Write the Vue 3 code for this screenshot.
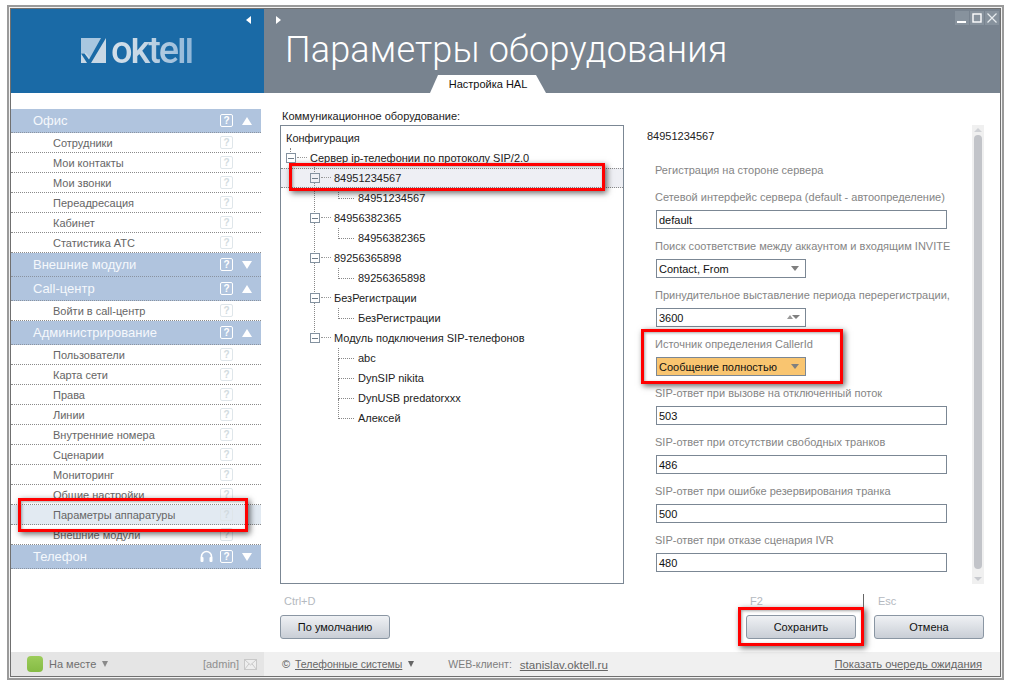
<script setup>
const groups = [
  { title: 'Офис', open: true, items: ['Сотрудники', 'Мои контакты', 'Мои звонки', 'Переадресация', 'Кабинет', 'Статистика АТС'] },
  { title: 'Внешние модули', open: false, items: [] },
  { title: 'Call-центр', open: true, items: ['Войти в call-центр'] },
  { title: 'Администрирование', open: true, items: ['Пользователи', 'Карта сети', 'Права', 'Линии', 'Внутренние номера', 'Сценарии', 'Мониторинг', 'Общие настройки', 'Параметры аппаратуры', 'Внешние модули'] },
  { title: 'Телефон', open: false, items: [], phone: true }
]
const rows = [
  { text: '84951234567', level: 1, exp: true, sel: true },
  { text: '84951234567', level: 2 },
  { text: '84956382365', level: 1, exp: true },
  { text: '84956382365', level: 2 },
  { text: '89256365898', level: 1, exp: true },
  { text: '89256365898', level: 2 },
  { text: 'БезРегистрации', level: 1, exp: true },
  { text: 'БезРегистрации', level: 2 },
  { text: 'Модуль подключения SIP-телефонов', level: 1, exp: true },
  { text: 'abc', level: 2, run: true },
  { text: 'DynSIP nikita', level: 2, run: true },
  { text: 'DynUSB predatorxxx', level: 2, run: true },
  { text: 'Алексей', level: 2 }
]
const fields = [
  { label: 'Сетевой интерфейс сервера (default - автоопределение)', value: 'default' },
  { label: 'Поиск соответствие между аккаунтом и входящим INVITE', value: 'Contact, From', kind: 'select' },
  { label: 'Принудительное выставление периода перерегистрации,', value: '3600', kind: 'spin' },
  { label: 'Источник определения CallerId', value: 'Сообщение полностью', kind: 'select', hot: true },
  { label: 'SIP-ответ при вызове на отключенный поток', value: '503' },
  { label: 'SIP-ответ при отсутствии свободных транков', value: '486' },
  { label: 'SIP-ответ при ошибке резервирования транка', value: '500' },
  { label: 'SIP-ответ при отказе сценария IVR', value: '480' }
]
</script>

<template>
  <div class="app">
    <div class="frame">
      <div class="inner">
        <header class="head">
          <div class="brand">
            <span class="tri-left"></span>
            <svg class="mark" width="25" height="25" viewBox="0 0 25 25">
              <path d="M0 0H25V25H0Z" fill="#c9d8e5" />
              <path d="M0 0H20L9 20L5 15H0Z" fill="#a9c7e0" />
              <path d="M0 15.500H3.500L8 21.500L20 0H25L10 25H6Z" fill="#1a6aa6" />
            </svg>
            <span class="logo">oktell</span>
          </div>
          <div class="title-area">
            <span class="tri-right"></span>
            <h1 class="title">Параметры оборудования</h1>
            <div class="tab">Настройка HAL</div>
            <div class="winbtns">
              <span class="wb"><svg width="14" height="14" viewBox="0 0 14 14"><rect x="2" y="10" width="9" height="2" fill="#fff" /></svg></span>
              <span class="wb"><svg width="14" height="14" viewBox="0 0 14 14"><rect x="3" y="3" width="8" height="8" fill="none" stroke="#fff" stroke-width="1.4" /></svg></span>
              <span class="wb"><svg width="14" height="14" viewBox="0 0 14 14"><path d="M2.5 2.5L11.5 11.5M11.5 2.5L2.5 11.5" stroke="#e8ecef" stroke-width="1.2" /></svg></span>
            </div>
          </div>
        </header>

        <div class="main">
          <nav class="side">
            <section v-for="g in groups" :key="g.title">
              <div class="ghead">
                <span class="gtitle">{{ g.title }}</span>
                <svg v-if="g.phone" class="phones" width="13" height="13" viewBox="0 0 13 13">
                  <path d="M1.500 8V6.500a5 5 0 0 1 10 0V8" fill="none" stroke="#fff" stroke-width="1.6" />
                  <rect x="0.500" y="7" width="3" height="5" rx="1" fill="#fff" />
                  <rect x="9.500" y="7" width="3" height="5" rx="1" fill="#fff" />
                </svg>
                <span class="help help-head">?</span>
                <span :class="g.open ? 'arrow-up' : 'arrow-down'"></span>
              </div>
              <div v-for="it in g.items" :key="it" class="item" :class="{ active: it === 'Параметры аппаратуры' }">
                <span class="itext">{{ it }}</span>
                <span class="help">?</span>
              </div>
            </section>
          </nav>

          <div class="middle">
            <div class="tlabel">Коммуникационное оборудование:</div>
            <div class="tree">
              <span class="stub-top"></span>
              <span class="spine"></span>
              <div class="root">Конфигурация</div>
              <div class="row lv0">
                <span class="marker"><span class="exp"></span><span class="dots"></span></span>Сервер ip-телефонии по протоколу SIP/2.0
              </div>
              <div v-for="(r, i) in rows" :key="i" class="row" :class="['lv' + r.level, { sel: r.sel }]">
                <span class="marker">
                  <template v-if="r.exp"><span class="exp"></span><span class="dots"></span></template>
                  <span v-else class="leaf" :class="{ run: r.run }"></span>
                </span>{{ r.text }}
              </div>
            </div>
            <div class="hint">Ctrl+D</div>
            <button class="btn">По умолчанию</button>
          </div>

          <div class="right">
            <div class="scrollwrap">
              <div class="form">
                <div class="fhead">84951234567</div>
                <div class="flabel first">Регистрация на стороне сервера</div>
                <div v-for="f in fields" :key="f.label" class="field">
                  <div class="flabel">{{ f.label }}</div>
                  <div class="input" :class="{ short: f.kind, hot: f.hot }">
                    {{ f.value }}
                    <span v-if="f.kind === 'select'" class="sel-arrow"></span>
                    <span v-if="f.kind === 'spin'" class="spin"><i class="spin-up"></i><i class="sel-arrow"></i></span>
                  </div>
                </div>
              </div>
              <div class="scrollbar">
                <i class="sb-up"></i>
                <i class="thumb"></i>
                <i class="sb-down"></i>
              </div>
            </div>
            <div class="actions">
              <div class="act">
                <div class="hint">F2</div>
                <button class="btn">Сохранить</button>
              </div>
              <div class="act">
                <div class="hint">Esc</div>
                <button class="btn">Отмена</button>
              </div>
            </div>
          </div>
        </div>

        <footer class="foot">
          <div class="foot-left">
            <span class="status"></span>
            <span class="place">На месте</span>
            <span class="mini-down"></span>
            <span class="admin">[admin]</span>
            <svg class="mail" width="13" height="11" viewBox="0 0 13 11">
              <rect x="0.500" y="0.500" width="12" height="10" fill="#eee" stroke="#c8c8c8" />
              <path d="M0.500 0.500L6.500 6L12.500 0.500M0.500 10.500L5 4.800M12.500 10.500L8 4.800" fill="none" stroke="#c8c8c8" />
            </svg>
          </div>
          <div class="foot-right">
            <span class="copy">©</span>
            <a class="flink small">Телефонные системы</a>
            <span class="mini-down dark"></span>
            <span class="web">WEB-клиент:</span>
            <a class="flink url">stanislav.oktell.ru</a>
            <a class="flink queue">Показать очередь ожидания</a>
          </div>
        </footer>
      </div>
    </div>

    <div class="mark-box box-side"></div>
    <div class="mark-box box-tree"></div>
    <div class="mark-box box-caller"></div>
    <div class="mark-box box-save"></div>
    <span class="save-tick"></span>
  </div>
</template>

<style scoped>
.app {
  position: relative;
  width: 1011px;
  height: 684px;
  padding: 5px 0 0 7px;
  box-sizing: border-box;
  font-family: "Liberation Sans", Arial, sans-serif;
  font-size: 11px;
  overflow: hidden;
  background: #fff;
}
.frame {
  width: 997px;
  height: 675px;
  box-sizing: border-box;
  border: 2px solid #9a9a9a;
  padding: 1px;
  background: #f2f2f2;
}
.inner {
  height: 100%;
  box-sizing: border-box;
  border: 1px solid #707070;
  background: #fff;
  display: flex;
  flex-direction: column;
}
.head { display: flex; height: 84px; flex: none; }
.brand {
  position: relative;
  width: 253px;
  flex: none;
  background: #1a6aa6;
  display: flex;
  align-items: flex-start;
  padding: 29px 0 0 70px;
  box-sizing: border-box;
  gap: 5px;
}
.mark { flex: none; }
.logo {
  font-family: Roboto, "Liberation Sans", sans-serif;
  font-size: 38px;
  font-weight: 500;
  line-height: 25px;
  letter-spacing: -2.1px;
  background: linear-gradient(90deg, #d4e0ea 0%, #c6d7e5 40%, #8fb6d8 100%);
  -webkit-background-clip: text;
  background-clip: text;
  color: transparent;
}
.tri-left {
  position: absolute;
  left: 235px;
  top: 7px;
  border-style: solid;
  border-width: 4px 5px 4px 0;
  border-color: transparent #fff transparent transparent;
}
.title-area {
  position: relative;
  flex: 1;
  background: #78838f;
  padding-left: 21px;
  display: flex;
  flex-direction: column;
}
.tri-right {
  position: absolute;
  left: 12px;
  top: 7px;
  border-style: solid;
  border-width: 4px 0 4px 5px;
  border-color: transparent transparent transparent #fff;
}
.title {
  margin: 17px 0 0;
  font-family: Roboto, "Liberation Sans", sans-serif;
  font-weight: 300;
  font-size: 36px;
  line-height: 48px;
  color: #fff;
  white-space: nowrap;
  letter-spacing: 0.2px;
}
.tab {
  margin: auto 0 0 145px;
  width: 116px;
  height: 18px;
  line-height: 19px;
  background: #fff;
  clip-path: polygon(8px 0, 106px 0, 116px 100%, 0 100%);
  text-align: center;
  color: #111;
}
.winbtns {
  position: absolute;
  right: 1px;
  top: 2px;
  display: flex;
  gap: 1px;
}
.wb {
  width: 14px;
  height: 14px;
  background: #87929d;
  display: block;
}
.wb svg { display: block; }

.main { flex: 1; display: flex; min-height: 0; }
.side { width: 250px; flex: none; padding-top: 16px; }
.ghead {
  height: 24px;
  box-sizing: border-box;
  background: #b0c4de;
  border-bottom: 1px dotted #8a93a0;
  display: flex;
  align-items: center;
  padding: 0 9px 0 22px;
  color: #f5f8fc;
}
.gtitle { font-size: 13px; flex: 1; }
.phones { margin-right: 7px; }
.help {
  width: 11px;
  height: 11px;
  line-height: 11px;
  border: 1px solid #dfe6ea;
  border-radius: 2px;
  color: #d2dbe0;
  font-size: 10px;
  font-weight: bold;
  text-align: center;
  flex: none;
}
.help-head { border-color: #fff; color: #fff; }
.arrow-up, .arrow-down {
  margin-left: 9px;
  border-style: solid;
  border-width: 0 5px 8px;
  border-color: transparent transparent #fff;
}
.arrow-down {
  border-width: 8px 5px 0;
  border-color: #fff transparent transparent;
}
.item {
  height: 20px;
  box-sizing: border-box;
  border-bottom: 1px dotted #8a8a8a;
  display: flex;
  align-items: center;
  padding: 0 28px 0 42px;
  color: #666;
}
.item.active { background: #e2eaf2; }
.itext { flex: 1; }

.middle { width: 344px; margin-left: 19px; flex: none; padding-top: 16px; }
.tlabel { height: 16px; line-height: 15px; padding-left: 2px; color: #222; }
.tree {
  position: relative;
  height: 459px;
  box-sizing: border-box;
  border: 1px solid #7b8794;
  padding-top: 2px;
  color: #222;
}
.root { height: 20px; line-height: 20px; padding-left: 5px; }
.row {
  height: 20px;
  line-height: 20px;
  display: flex;
  white-space: nowrap;
  box-sizing: border-box;
}
.lv0 { padding-left: 4px; }
.lv1 { padding-left: 28px; }
.lv2 { padding-left: 52px; }
.sel {
  background: #eeeff4;
  border-top: 1px dotted #8a8a8a;
  border-bottom: 1px dotted #8a8a8a;
  line-height: 18px;
}
.marker { position: relative; width: 25px; height: 20px; flex: none; display: block; }
.sel .marker { margin-top: -1px; }
.exp {
  position: absolute;
  z-index: 1;
  left: 1px;
  top: 5px;
  width: 8px;
  height: 8px;
  border: 1px solid #8492a0;
  background: #fff linear-gradient(#6e7c8a, #6e7c8a) center / 6px 1px no-repeat;
}
.sel .exp { background-color: #eeeff4; }
.dots {
  position: absolute;
  left: 12px;
  top: 9px;
  width: 10px;
  border-top: 1px dotted #999;
}
.leaf {
  position: absolute;
  left: 5px;
  top: 0;
  width: 15px;
  height: 10px;
  border-left: 1px dotted #888;
  border-bottom: 1px dotted #888;
}
.leaf.run::after {
  content: "";
  position: absolute;
  left: -1px;
  top: 11px;
  height: 10px;
  border-left: 1px dotted #888;
}
.spine {
  position: absolute;
  left: 33px;
  top: 38px;
  height: 170px;
  border-left: 1px dotted #888;
}
.stub-top {
  position: absolute;
  left: 9px;
  top: 22px;
  height: 6px;
  border-left: 1px dotted #888;
}
.hint {
  height: 16px;
  line-height: 16px;
  margin-top: 9px;
  padding-left: 4px;
  color: #b4b9c0;
}
.btn {
  display: block;
  width: 110px;
  height: 24px;
  margin-top: 6px;
  padding: 0;
  border: 1px solid #8a96a3;
  border-radius: 3px;
  background: linear-gradient(#eff1f4, #c9ced6);
  font: 11px "Liberation Sans", Arial, sans-serif;
  color: #111;
}

.right { width: 337px; margin-left: 23px; flex: none; padding-top: 32px; }
.scrollwrap { height: 459px; display: flex; justify-content: space-between; }
.form { width: 307px; overflow: hidden; }
.fhead { height: 22px; line-height: 23px; color: #222; }
.flabel {
  height: 16px;
  line-height: 16px;
  margin-left: 8px;
  color: #858585;
  white-space: nowrap;
  font-size: 11px;
}
.flabel.first { margin-top: 15px; margin-bottom: 11px; }
.field { height: 49px; }
.input {
  position: relative;
  box-sizing: border-box;
  width: 291px;
  height: 19px;
  margin: 5px 0 0 9px;
  border: 1px solid #7b8794;
  background: #fff;
  line-height: 18px;
  padding-left: 2px;
  color: #111;
}
.input.short { width: 150px; }
.input.hot { background: #f9c570; }
.sel-arrow {
  position: absolute;
  right: 6px;
  top: 6px;
  border-style: solid;
  border-width: 5px 4px 0;
  border-color: #7f7f7f transparent transparent;
}
.spin { position: absolute; right: 0; top: 0; }
.spin .sel-arrow { right: 5px; top: 6px; border-width: 4px 4px 0; }
.spin-up {
  position: absolute;
  right: 12px;
  top: 6px;
  border-style: solid;
  border-width: 0 3.500px 4px;
  border-color: transparent transparent #9a9a9a;
}
.scrollbar {
  position: relative;
  width: 12px;
  background: #f0f0f0;
  flex: none;
}
.thumb {
  position: absolute;
  left: 2px;
  top: 10px;
  width: 8px;
  height: 434px;
  border-radius: 4px;
  background: #c2c4c9;
}
.sb-up, .sb-down {
  position: absolute;
  left: 2px;
  border-style: solid;
  border-width: 0 4px 4px;
  border-color: transparent transparent #d0d2d6;
  top: 3px;
}
.sb-down {
  top: auto;
  bottom: 3px;
  border-width: 4px 4px 0;
  border-color: #c8cacf transparent transparent;
}
.actions { display: flex; justify-content: flex-end; gap: 18px; }

.foot { height: 24px; flex: none; display: flex; color: #777; }
.foot-left {
  width: 253px;
  flex: none;
  background: #e5e5e5;
  display: flex;
  align-items: center;
  padding-left: 16px;
  box-sizing: border-box;
}
.status {
  width: 16px;
  height: 16px;
  border-radius: 4px;
  background: linear-gradient(#9ccc5a, #85bb44);
}
.place { margin-left: 6px; color: #6f6f6f; }
.mini-down {
  margin-left: 6px;
  border-style: solid;
  border-width: 6px 3px 0;
  border-color: #8a8a8a transparent transparent;
}
.mini-down.dark { border-color: #666 transparent transparent; }
.admin { margin-left: auto; color: #8f8f8f; }
.mail { margin: 0 7px 0 5px; }
.foot-right {
  flex: 1;
  background: #f0f0f0;
  display: flex;
  align-items: center;
  padding-left: 18px;
}
.copy { color: #555; width: 13px; flex: none; }
.flink { color: #666; text-decoration: underline; font-size: 11.2px; }
.flink.small { font-size: 10.500px; }
.web { margin-left: 34px; color: #7d7d7d; font-size: 10.500px; }
.flink.url { margin-left: 8px; font-size: 11.600px; }
.queue { margin-left: auto; margin-right: 18px; }

.mark-box {
  position: absolute;
  box-sizing: border-box;
  border: 3px solid #f00;
  box-shadow: 2px 2px 6px rgba(0, 0, 0, 0.6), inset 1px 1px 3px rgba(0, 0, 0, 0.35);
}
.box-side { left: 18px; top: 498px; width: 230px; height: 34px; }
.box-tree { left: 289px; top: 163px; width: 316px; height: 28px; }
.box-caller { left: 641px; top: 329px; width: 202px; height: 55px; }
.box-save { left: 738px; top: 607px; width: 126px; height: 39px; }
.save-tick {
  position: absolute;
  left: 863px;
  top: 594px;
  width: 1px;
  height: 13px;
  background: #666;
}
</style>
